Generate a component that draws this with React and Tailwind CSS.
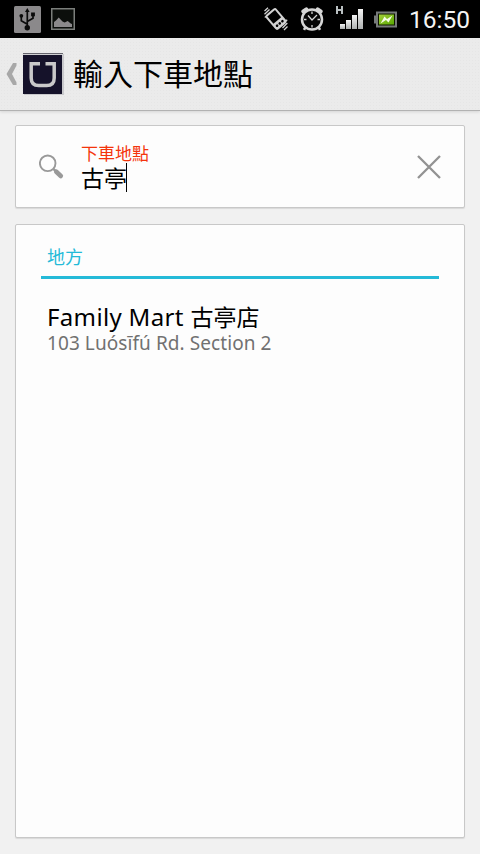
import React from 'react';

const UsbIcon = () => (
  <svg width="27" height="27" viewBox="0 0 27 27">
    <rect width="27" height="27" rx="1.5" fill="#8b898b" />
    <g fill="none" stroke="#0b0b0b" strokeWidth="1.7">
      <path d="M13.3 5v16M13.3 18.2L7.3 14.8V10M13.3 15.6l5.7-3.3V9" />
    </g>
    <g fill="#0b0b0b">
      <path d="M13.3 2l2.3 4h-4.6z" />
      <circle cx="13.3" cy="21.8" r="2.7" />
      <circle cx="7.3" cy="9.8" r="1.9" />
      <rect x="17.1" y="6.5" width="3.8" height="3.8" />
    </g>
  </svg>
);

const PictureIcon = () => (
  <svg width="24" height="22" viewBox="0 0 24 22">
    <rect x="0.75" y="0.75" width="22.5" height="20.5" fill="#0c0f0c" stroke="#7b7e7b" strokeWidth="1.5" />
    <path d="M3 19v-5l2-1.5L7.7 9.5l3.8 4 2.2 1 3-1.5 3 2.5 1.3.5v3z" fill="#8b898b" />
  </svg>
);

const VibrateIcon = () => (
  <svg width="24" height="24" viewBox="0 0 24 24" fill="none" stroke="#d2d2d2">
    <g transform="rotate(-40 12 12)">
      <rect x="5" y="2.5" width="14" height="19" rx="2.5" fill="#d2d2d2" stroke="none" />
      <rect x="7" y="4.5" width="10" height="9.5" fill="#000" stroke="none" />
      <g fill="#000" stroke="none">
        <circle cx="8.5" cy="17.8" r="1.3" />
        <circle cx="12" cy="17.8" r="1.3" />
        <circle cx="15.5" cy="17.8" r="1.3" />
      </g>
    </g>
    <path d="M.5 4L4 .8M.5 7.3L5.500 2.500M.8 10.500L3 8.500M23.3 16L18.500 21M23.500 19.500L20 23M23.200 12.800L21 15" strokeWidth="1.3" />
  </svg>
);

const AlarmIcon = () => (
  <svg width="24" height="24" viewBox="0 0 24 24" fill="none" stroke="#d6d6d6">
    <path d="M3.3 4.3l3-2M20.7 4.3l-3-2" strokeWidth="4" strokeLinecap="round" />
    <path d="M5.5 20L4 22.8M18.5 20l1.5 2.8" strokeWidth="2.6" />
    <circle cx="12" cy="12.5" r="10" fill="#050505" strokeWidth="2.5" />
    <path d="M12 4.5V7M12 18v2.500M4 12.500h2.500M17.500 12.500H20M8 8.500l4 4.500 5-5" strokeWidth="1.3" />
  </svg>
);

const SignalIcon = () => (
  <svg width="28" height="26" viewBox="0 0 28 26">
    <defs>
      <linearGradient id="bars" x1="0" y1="0" x2="0" y2="1">
        <stop offset="0" stopColor="#f4f4f4" />
        <stop offset="1" stopColor="#adb0b0" />
      </linearGradient>
    </defs>
    <path d="M2 0v8M7 0v8M2 4h5" stroke="#b9bfc1" strokeWidth="2" fill="none" />
    <g fill="url(#bars)">
      <rect x="5" y="18" width="5" height="5" />
      <rect x="11" y="14" width="5" height="9" />
      <rect x="17" y="9" width="5" height="14" />
      <rect x="23" y="3" width="5" height="20" />
    </g>
  </svg>
);

const BatteryIcon = () => (
  <svg width="23" height="17" viewBox="0 0 23 17">
    <defs>
      <linearGradient id="charge" x1="0" y1="0" x2="1" y2="1">
        <stop offset="0" stopColor="#a4cf3a" />
        <stop offset="1" stopColor="#58a800" />
      </linearGradient>
    </defs>
    <path d="M0 4.5h2V.5h21v16H2v-4H0z" fill="#777a7a" />
    <rect x="4" y="2.5" width="17" height="12" fill="#101800" />
    <rect x="5" y="3.5" width="15" height="10" fill="url(#charge)" />
    <path d="M6.5 12.5l4-7L13 8l5.5-3.500-4 7L12 9z" fill="#f4fbe4" />
  </svg>
);

const AppLogo = () => (
  <svg width="41" height="42" viewBox="0 0 41 42">
    <rect x="1" y="1" width="40" height="41" fill="#c9c9cc" />
    <rect x="0" y="0" width="40" height="1" fill="#65646d" />
    <rect x="0" y="1" width="40" height="1" fill="#d0d0d3" />
    <rect x="0" y="2" width="39" height="39" fill="#15122a" />
    <path d="M17 10.700H8.200V25q0 7.500 7.500 7.500h8q7.500 0 7.500-7.500V10.700H22.500" fill="none" stroke="#c9c9c9" strokeWidth="3.500" />
  </svg>
);

const SearchIcon = () => (
  <svg width="26" height="26" viewBox="0 0 26 26" fill="none" stroke="#999">
    <circle cx="8.7" cy="9.3" r="7.8" strokeWidth="1.9" />
    <path d="M14.3 14.8l3 2.8" strokeWidth="2.5" />
    <path d="M17.3 17.8l4.5 4.2" strokeWidth="4.6" strokeLinecap="round" />
  </svg>
);

const StatusBar = () => (
  <div className="flex h-[38px] shrink-0 items-center bg-black pl-3.5 pr-[10px]">
    <UsbIcon />
    <div className="ml-2.5">
      <PictureIcon />
    </div>
    <div className="ml-auto flex items-center">
      <VibrateIcon />
      <div className="ml-3">
        <AlarmIcon />
      </div>
      <div className="ml-[11px]">
        <SignalIcon />
      </div>
      <div className="ml-[11px]">
        <BatteryIcon />
      </div>
      <span className="ml-3 w-[61px] whitespace-nowrap pt-px font-[Roboto,sans-serif] text-[24.5px] leading-[38px] text-[#f4f4f4]">
        16:50
      </span>
    </div>
  </div>
);

const places = [{ name: 'Family Mart', branch: '古亭店', address: '103 Luósīfú Rd. Section 2' }];

export default function App() {
  return (
    <div className="flex h-[854px] w-[480px] flex-col overflow-hidden bg-[#f1f1f1] font-['Noto_Sans','Noto_Sans_CJK_TC',sans-serif]">
      <StatusBar />

      <header className="flex h-[73px] shrink-0 items-center border-b border-[#b2b2b2] bg-[#ebebeb] bg-[radial-gradient(#e6e6e6_25%,transparent_25%)] bg-size-[3px_3px] pl-[6px] shadow-[0_1px_3px_rgba(0,0,0,0.12)]">
        <svg width="11" height="22" viewBox="0 0 11 22" className="shrink-0">
          <path d="M7 0h3.500v2.500L6 11l4.500 8.500V22H7L.5 11z" fill="#a8a8a8" />
        </svg>
        <div className="ml-1.5">
          <AppLogo />
        </div>
        <h1 className="ml-[9px] pb-[5px] font-['Noto_Sans_CJK_TC',sans-serif] text-[30px] leading-[40px] text-black">
          輸入下車地點
        </h1>
      </header>

      <main className="flex flex-1 flex-col gap-4 px-[15px] pb-4 pt-3.5">
        <div className="flex h-[83px] shrink-0 items-center rounded-xs border border-[#c8c8c8] bg-[#fdfdfd] px-[23px] shadow-[0_1px_1px_rgba(0,0,0,0.1)]">
          <SearchIcon />
          <div className="ml-[16px] flex-1 pt-[2px] font-['Noto_Sans_CJK_TC',sans-serif]">
            <div className="text-[17px] leading-[20px] text-[#f4340b]">下車地點</div>
            <div className="flex h-[29px] items-center text-[23px] leading-[29px] text-black">
              <span>古亭</span>
              <span className="-ml-px h-[29px] w-px bg-black" />
            </div>
          </div>
          <svg width="24" height="24" viewBox="0 0 24 24" stroke="#929292" strokeWidth="2.3" className="mt-px">
            <path d="M1 1l22 22M23 1L1 23" />
          </svg>
        </div>

        <section className="flex-1 rounded-xs border border-[#c8c8c8] bg-[#fdfdfd] px-[25px] pt-[17px] shadow-[0_1px_1px_rgba(0,0,0,0.1)]">
          <h2 className="h-[37px] border-b-3 border-[#24bad8] px-[6px] text-[18px] leading-[30px] text-[#24bad8]">地方</h2>
          <ul>
            {places.map((place) => (
              <li key={place.name} className="px-[6px] pt-[23px]">
                <div className="whitespace-nowrap text-[24px] leading-[30px] tracking-[0.34px] text-black">
                  {place.name} <span className="text-[23px] tracking-normal">{place.branch}</span>
                </div>
                <div className="whitespace-nowrap text-[19px] leading-[22px] tracking-[0.08px] text-[#717171]">
                  {place.address}
                </div>
              </li>
            ))}
          </ul>
        </section>
      </main>
    </div>
  );
}
